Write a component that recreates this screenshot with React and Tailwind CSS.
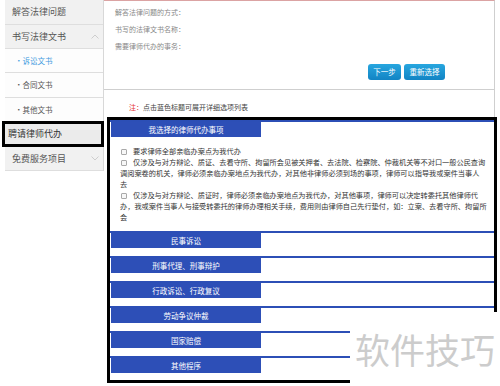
import React from 'react';

const font = { fontFamily: '"Noto Sans CJK SC", "Noto Sans", sans-serif' };

const Chevron = ({ up }) => (
    <svg width="8" height="5" viewBox="0 0 8 5" className="mr-[4px]">
        <polyline points={up ? "0.5,4.5 4,1 7.5,4.5" : "0.5,0.5 4,4 7.5,0.5"} fill="none" stroke="#c4c4c4" strokeWidth="0.8" />
    </svg>
);

const SideRow = ({ children, h, gray, chevron, className = '' }) => (
    <div className={`flex items-center justify-between border-b border-[#dedede] ${gray ? 'bg-[#f1f1f1]' : 'bg-[#fdfdfd]'} ${h} ${className}`}>
        {children}
        {chevron}
    </div>
);

const Box = () => <span className="inline-block w-[6px] h-[6px] border border-[#a9a9a9] rounded-[1px] bg-[#f7f7f7] ml-[1px] mr-[6px] align-middle" />;

const Section = ({ title, children, last }) => (
    <div className={`border-t-2 border-[#2c4fb6] ${last ? '' : 'mb-[8px]'}`}>
        <div className="ml-[1px] w-[150px] h-[15px] bg-[#2d4fb7] text-white text-[7.5px] flex items-center justify-center">{title}</div>
        {children}
    </div>
);

const lines = [
    { box: true, text: '要求律师全部亲临办案点为我代办' },
    { box: true, text: '仅涉及与对方辩论、质证、去看守所、拘留所会见被关押者、去法院、检察院、仲裁机关等不对口一般公民查询' },
    { text: '调阅案卷的机关，律师必须亲临办案地点为我代办，对其他非律师必须到场的事项，律师可以指导我或案件当事人' },
    { text: '去' },
    { box: true, text: '仅涉及与对方辩论、质证时，律师必须亲临办案地点为我代办，对其他事项，律师可以决定转委托其他律师代' },
    { text: '办，我或案件当事人与接受转委托的律师办理相关手续，费用则由律师自己先行垫付，如：立案、去看守所、拘留所' },
    { text: '会' },
];

export default function App() {
    return (
        <div className="relative w-[500px] h-[386px] bg-white overflow-hidden flex" style={font}>
            <div className="w-[104px] shrink-0 pl-[5px]">
                <div className="border-r border-[#d8d8d8]">
                    <SideRow h="h-[25px]" gray><span className="pl-[7px] text-[9px] text-[#555]">解答法律问题</span></SideRow>
                    <SideRow h="h-[24px]" gray chevron={<Chevron up />}><span className="pl-[7px] text-[9px] text-[#555]">书写法律文书</span></SideRow>
                    <SideRow h="h-[24px]"><span className="pl-[10px] text-[7.5px] text-[#3f9be0]">•诉讼文书</span></SideRow>
                    <SideRow h="h-[25px]"><span className="pl-[10px] text-[7.5px] text-[#555]">•合同文书</span></SideRow>
                    <SideRow h="h-[23px]" className="border-b-0"><span className="pl-[10px] text-[7.5px] text-[#555]">•其他文书</span></SideRow>
                </div>
                <div className="-ml-[3px] w-[102px] h-[26px] border-[3px] border-black bg-[#ebebeb] flex items-center">
                    <span className="pl-[3px] text-[9px] text-[#333]">聘请律师代办</span>
                </div>
                <div className="border-r border-[#d8d8d8]">
                    <SideRow h="h-[24px]" gray chevron={<Chevron />}><span className="pl-[7px] text-[9px] text-[#555]">免费服务项目</span></SideRow>
                </div>
            </div>

            <div className="w-[391px] shrink-0 border-t border-[#dba3a3] border-r border-r-[#cfcfcf]">
                <div className="h-[89px] border-b border-[#cfcfcf] pt-[3px] pl-[11px] text-[7px] text-[#888]">
                    <div className="h-[17px] flex items-center">解答法律问题的方式：</div>
                    <div className="h-[17px] flex items-center">书写的法律文书名称：</div>
                    <div className="h-[17px] flex items-center">需要律师代办的事务：</div>
                    <div className="mt-[9px] flex justify-end gap-[3px] pr-[49px]">
                        <button className="h-[16px] w-[33px] rounded-[3px] bg-gradient-to-b from-[#27a6df] to-[#1284c4] text-white text-[7.5px]">下一步</button>
                        <button className="h-[16px] w-[41px] rounded-[3px] bg-gradient-to-b from-[#27a6df] to-[#1284c4] text-white text-[7.5px]">重新选择</button>
                    </div>
                </div>
                <div className="pt-[12px] pl-[25px] text-[7px] leading-[10px] text-[#444]">
                    <span className="text-[#e53333]">注：</span>点击蓝色标题可展开详细选项列表
                </div>
                <div className="mt-[5px] ml-[3px] w-[390px] h-[266px] border-[3px] border-black pb-[9px]">
                    <Section title="我选择的律师代办事项">
                        <div className="mt-[9px] mb-[6px] pl-[10px] text-[7.2px] text-[#333]">
                            {lines.map((l, i) => (
                                <div key={i} className="h-[11px] leading-[11px] whitespace-nowrap">
                                    {l.box && <Box />}
                                    {l.text}
                                </div>
                            ))}
                        </div>
                    </Section>
                    <Section title="民事诉讼" />
                    <Section title="刑事代理、刑事辩护" />
                    <Section title="行政诉讼、行政复议" />
                    <Section title="劳动争议仲裁" />
                    <Section title="国家赔偿" />
                    <Section title="其他程序" last />
                </div>
            </div>

            <div className="absolute left-[350px] top-[312px] w-[150px] h-[74px] bg-white flex items-center justify-center">
                <span className="text-[35px] text-[#cccccc] tracking-[0px]">软件技巧</span>
            </div>
        </div>
    );
}
